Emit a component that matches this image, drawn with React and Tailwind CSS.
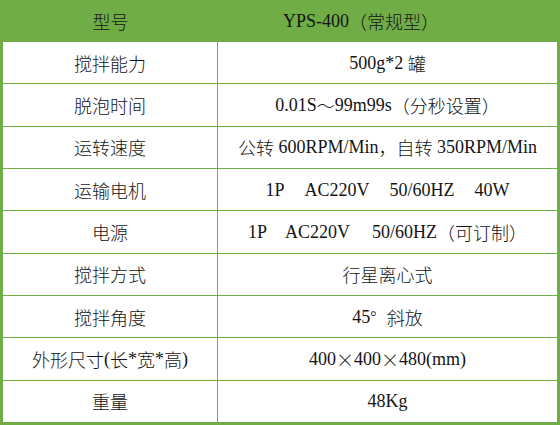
const CJK = /[\u3000-\u303f\u4e00-\u9fff\uff00-\uffef\u00d7\u00b0]/;

// split a string into CJK runs and latin runs so each can get its own face
function Txt({ text }) {
  const parts = [];
  let cur = "";
  let curCjk = null;
  for (const ch of text) {
    const isCjk = CJK.test(ch);
    if (curCjk !== null && isCjk !== curCjk) {
      parts.push([cur, curCjk]);
      cur = "";
    }
    cur += ch;
    curCjk = isCjk;
  }
  if (cur) parts.push([cur, curCjk]);
  return parts.map(([s, isCjk], i) =>
    isCjk ? (
      <span key={i} className="font-['Noto_Sans_CJK_SC',sans-serif] text-[18px] font-light">
        {s}
      </span>
    ) : (
      <span key={i} className="font-['Liberation_Serif',serif] text-[18px] whitespace-pre">
        {s}
      </span>
    )
  );
}

const Gap = ({ w = "w-[20px]" }) => <span className={`inline-block ${w}`} />;

const rows = [
  ["搅拌能力", <Txt text="500g*2 罐" />],
  ["脱泡时间", <Txt text="0.01S～99m99s（分秒设置）" />],
  ["运转速度", <Txt text="公转 600RPM/Min，自转 350RPM/Min" />],
  [
    "运输电机",
    <>
      <Txt text="1P" />
      <Gap />
      <Txt text="AC220V" />
      <Gap />
      <Txt text="50/60HZ" />
      <Gap />
      <Txt text="40W" />
    </>,
  ],
  [
    "电源",
    <>
      <Txt text="1P" />
      <span className="inline-block w-[18px]" />
      <Txt text="AC220V" />
      <span className="inline-block w-[22px]" />
      <Txt text="50/60HZ（可订制）" />
    </>,
  ],
  ["搅拌方式", <Txt text="行星离心式" />],
  [
    "搅拌角度",
    <>
      <Txt text="45°" />
      <span className="inline-block w-[10px]" />
      <Txt text="斜放" />
    </>,
  ],
  ["外形尺寸(长*宽*高)", <Txt text="400×400×480(mm)" />],
  ["重量", <Txt text="48Kg" />],
];

export default function App() {
  return (
    <div className="w-[560px] h-[425px] flex flex-col bg-white text-[#141414] leading-none">
      <div className="h-[42px] shrink-0 bg-[#70ad47] flex items-center">
        <div className="w-[218px] flex justify-center pl-[3px]">
          <Txt text="型号" />
        </div>
        <div className="flex-1 flex justify-start pl-[65px]">
          <Txt text="YPS-400（常规型）" />
        </div>
      </div>
      <div className="flex-1 flex flex-col border-x-[3px] border-b-[3px] border-[#70ad47]">
        {rows.map(([label, value], i) => (
          <div
            key={i}
            className={`flex-1 flex ${i > 0 ? "border-t border-[#70ad47]" : ""}`}
          >
            <div className="w-[215px] shrink-0 flex items-center justify-center border-r border-[#70ad47]">
              <Txt text={label} />
            </div>
            <div className="flex-1 flex items-center justify-center">{value}</div>
          </div>
        ))}
      </div>
    </div>
  );
}
